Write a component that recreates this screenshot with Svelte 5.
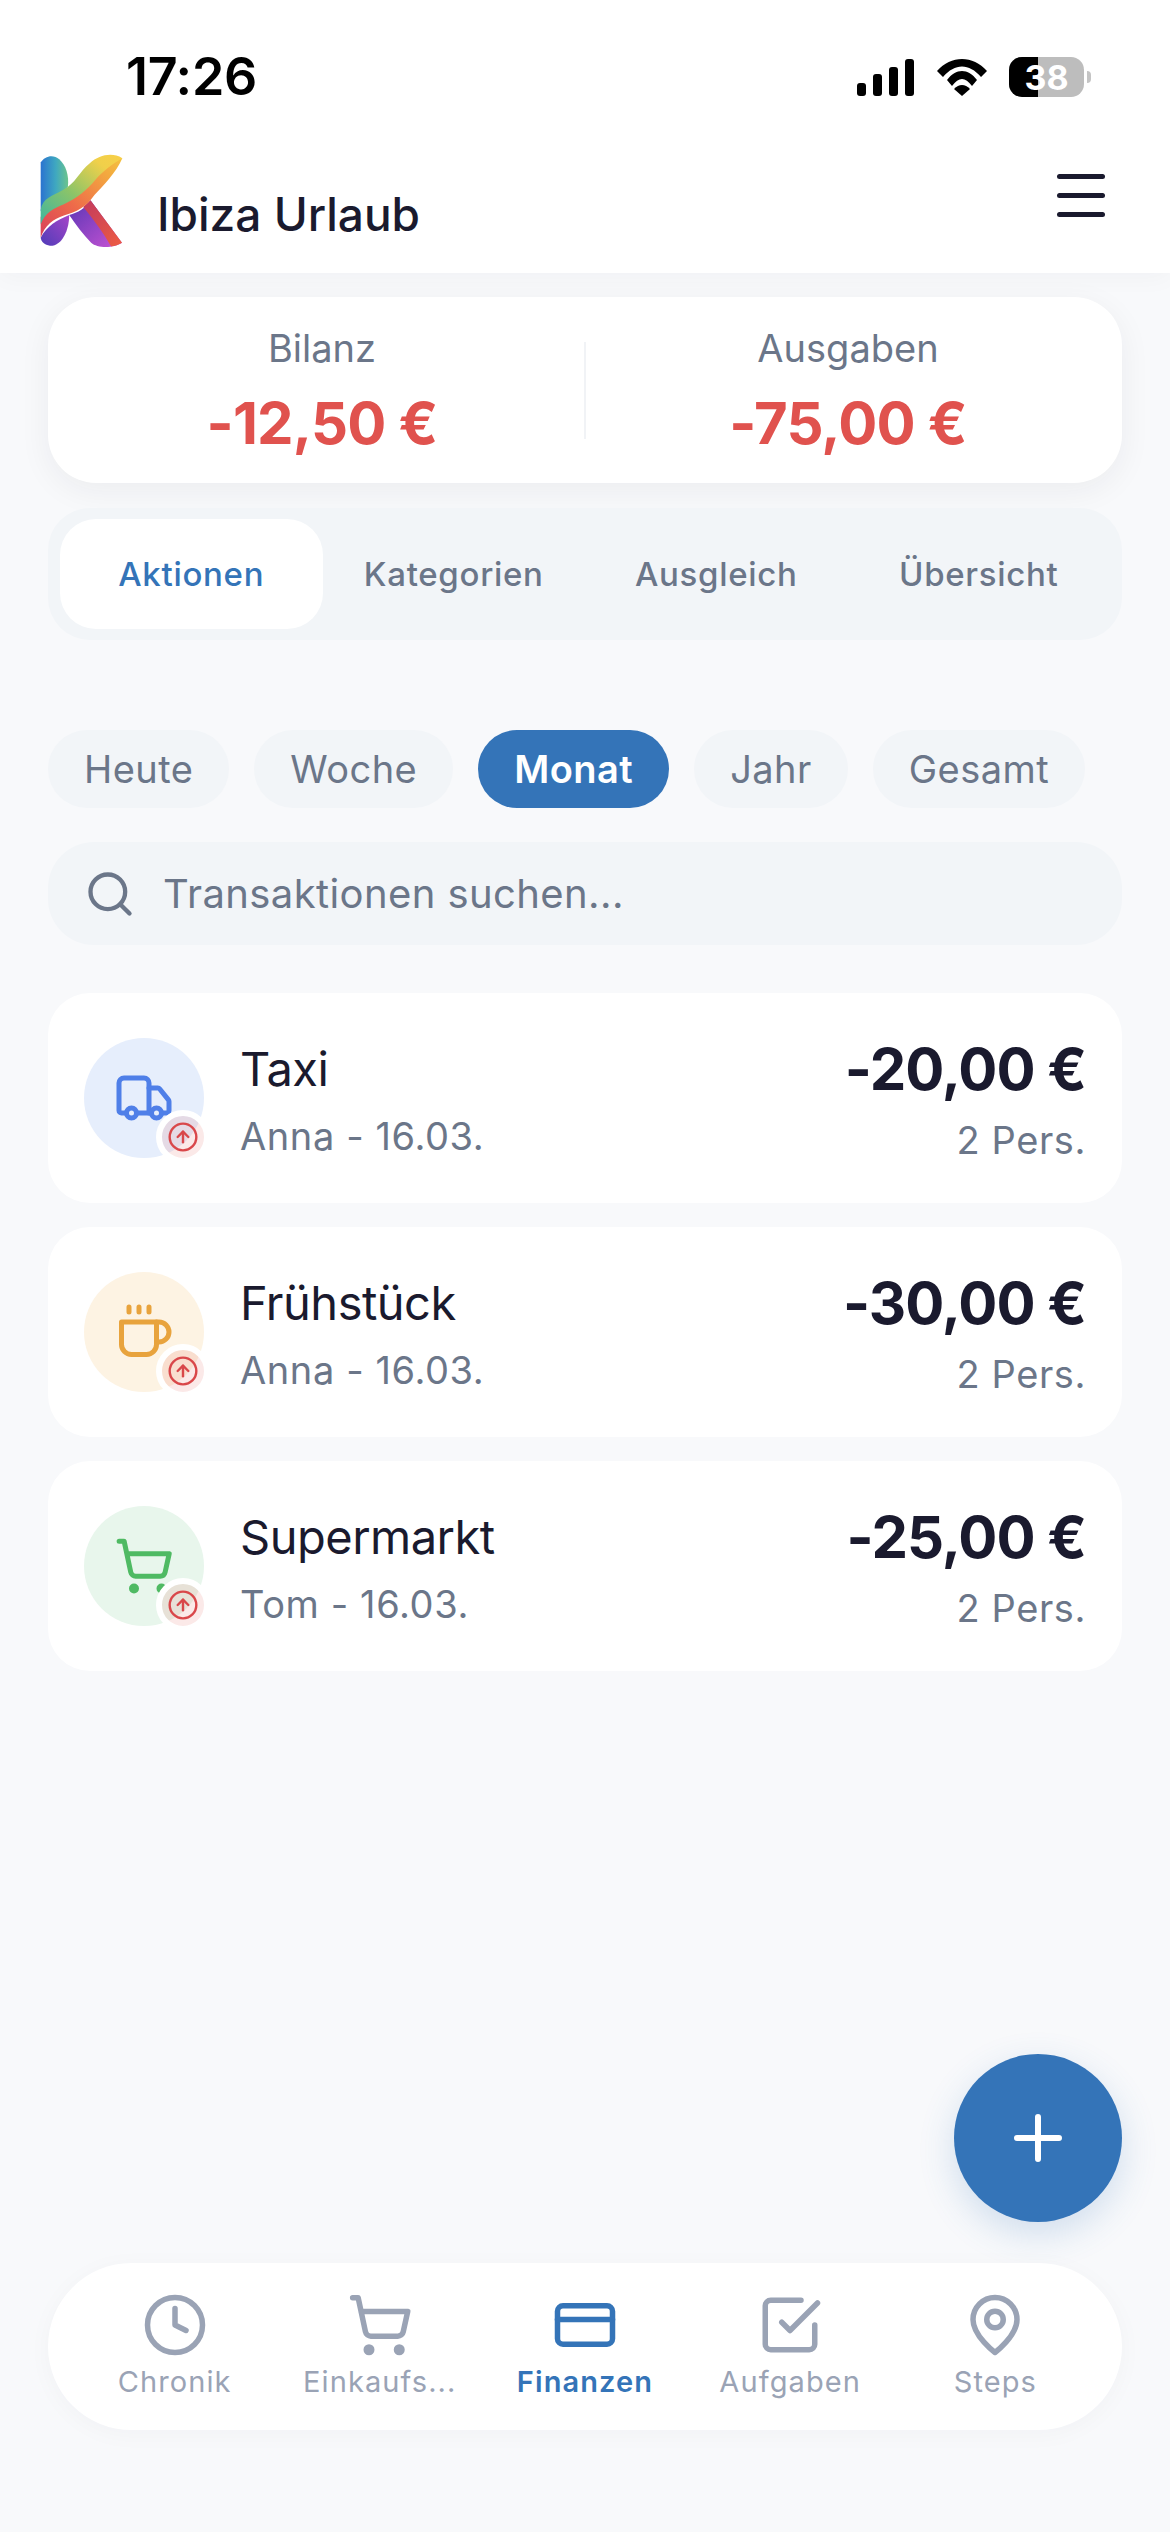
<script>
	const tabs = ['Aktionen', 'Kategorien', 'Ausgleich', 'Übersicht'];
	const ranges = ['Heute', 'Woche', 'Monat', 'Jahr', 'Gesamt'];
	const transactions = [
		{ kind: 'truck', title: 'Taxi', meta: 'Anna - 16.03.', amount: '-20,00 €', people: '2 Pers.' },
		{ kind: 'coffee', title: 'Frühstück', meta: 'Anna - 16.03.', amount: '-30,00 €', people: '2 Pers.' },
		{ kind: 'cart', title: 'Supermarkt', meta: 'Tom - 16.03.', amount: '-25,00 €', people: '2 Pers.' }
	];
	const navItems = [
		{ kind: 'clock', label: 'Chronik' },
		{ kind: 'cart', label: 'Einkaufs...' },
		{ kind: 'card', label: 'Finanzen', active: true },
		{ kind: 'check', label: 'Aufgaben' },
		{ kind: 'pin', label: 'Steps' }
	];
</script>

{#snippet icon(kind)}
	<svg class="icon" viewBox="0 0 24 24" fill="none" stroke="currentColor" stroke-width="2" stroke-linecap="round" stroke-linejoin="round">
		{#if kind === 'truck'}
			<path d="M14 18V6a2 2 0 0 0-2-2H4a2 2 0 0 0-2 2v11a1 1 0 0 0 1 1h2" />
			<path d="M15 18H9" />
			<path d="M19 18h2a1 1 0 0 0 1-1v-3.65a1 1 0 0 0-.22-.624l-3.48-4.35A1 1 0 0 0 17.52 8H14" />
			<circle cx="17" cy="18" r="2" />
			<circle cx="7" cy="18" r="2" />
		{:else if kind === 'coffee'}
			<path d="M17 8h1a4 4 0 1 1 0 8h-1" />
			<path d="M3 8h14v9a4 4 0 0 1-4 4H7a4 4 0 0 1-4-4Z" />
			<path d="M6 2v2M10 2v2M14 2v2" />
		{:else if kind === 'cart'}
			<circle cx="8" cy="21" r="1" />
			<circle cx="19" cy="21" r="1" />
			<path d="M2.05 2.05h2l2.66 12.42a2 2 0 0 0 2 1.58h9.78a2 2 0 0 0 1.95-1.57l1.65-7.43H5.12" />
		{:else if kind === 'clock'}
			<circle cx="12" cy="12" r="10" />
			<path d="M12 6v6l4 2" />
		{:else if kind === 'card'}
			<rect x="2" y="5" width="20" height="14" rx="2" />
			<path d="M2 10h20" />
		{:else if kind === 'check'}
			<path d="m9 11 3 3L22 4" />
			<path d="M21 12v7a2 2 0 0 1-2 2H5a2 2 0 0 1-2-2V5a2 2 0 0 1 2-2h11" />
		{:else if kind === 'pin'}
			<path d="M20 10c0 6-8 12-8 12s-8-6-8-12a8 8 0 0 1 16 0Z" />
			<circle cx="12" cy="10" r="3" />
		{/if}
	</svg>
{/snippet}

<div class="app">
	<header class="top">
		<div class="status">
			<span class="time">17:26</span>
			<div class="status-icons">
				<div class="signal">
					<i class="s1"></i><i class="s2"></i><i class="s3"></i><i class="s4"></i>
				</div>
				<svg class="wifi" viewBox="0 0 50 37">
					<path d="M0 12 C14 -4 36 -4 50 12 L44 18 C32 4 18 4 6 18 Z" fill="#000" />
					<path d="M10 21 C19 9 31 9 40 21 L35 27 C28 17.500 22 17.500 15 27 Z" fill="#000" />
					<path d="M17 30 C22 24.500 28 24.500 33 30 L25 37 Z" fill="#000" />
				</svg>
				<div class="battery">
					<div class="battery-body">
						<div class="battery-fill"></div>
						<span>38</span>
					</div>
					<div class="battery-nub"></div>
				</div>
			</div>
		</div>
		<div class="brand-row">
			<div class="brand">
				<svg class="logo" viewBox="58 70 250 285">
					<defs>
						<linearGradient id="stem" x1="0" y1="0" x2="1" y2="0">
							<stop offset="0" stop-color="#2b73d0" />
							<stop offset="0.55" stop-color="#3fa8c0" />
							<stop offset="1" stop-color="#6cc48c" />
						</linearGradient>
						<linearGradient id="band" x1="0" y1="1" x2="1" y2="0">
							<stop offset="0" stop-color="#3db5a0" />
							<stop offset="0.42" stop-color="#8cc468" />
							<stop offset="0.8" stop-color="#f0d04a" />
							<stop offset="1" stop-color="#f8cf48" />
						</linearGradient>
						<linearGradient id="ribbon" x1="0" y1="1" x2="1" y2="0">
							<stop offset="0" stop-color="#d8405a" />
							<stop offset="0.4" stop-color="#ee6a4a" />
							<stop offset="0.8" stop-color="#f3a83f" />
							<stop offset="1" stop-color="#f4c23f" />
						</linearGradient>
						<linearGradient id="foot" x1="0" y1="1" x2="1" y2="0">
							<stop offset="0" stop-color="#4f3cb8" />
							<stop offset="1" stop-color="#a545c8" />
						</linearGradient>
						<linearGradient id="leg" x1="0" y1="0" x2="1" y2="1">
							<stop offset="0" stop-color="#5a35b5" />
							<stop offset="1" stop-color="#c854d4" />
						</linearGradient>
						<linearGradient id="leg2" x1="0" y1="0" x2="1" y2="1">
							<stop offset="0" stop-color="#c23a5e" />
							<stop offset="1" stop-color="#ee5c42" />
						</linearGradient>
					</defs>
					<path d="M60 98 C72 78 98 72 116 88 C136 106 146 136 142 172 L100 210 L60 245 Z" fill="url(#stem)" />
					<path d="M60 325 C78 288 110 272 146 256 C146 300 125 350 88 349 C72 347 62 338 60 325 Z" fill="url(#foot)" />
					<path d="M146 256 C172 250 196 236 210 212 L305 340 C282 356 232 358 212 340 C188 314 166 286 146 256 Z" fill="url(#leg)" />
					<path d="M188 232 L210 212 L305 340 C296 346 284 350 272 351 C250 310 218 268 188 232 Z" fill="url(#leg2)" />
					<path d="M60 325 L60 262 C72 234 100 226 128 214 C168 196 192 158 220 126 C244 100 278 82 306 85 C286 130 250 166 222 196 C196 234 168 246 130 258 C98 268 72 288 60 325 Z" fill="url(#ribbon)" />
					<path d="M60 285 L60 240 C66 206 96 198 126 182 C166 160 176 126 208 100 C236 76 274 66 306 85 C280 100 245 125 225 150 C200 180 170 205 130 224 C100 236 72 250 60 285 Z" fill="url(#band)" />
				</svg>
				<span class="brand-name">Ibiza Urlaub</span>
			</div>
			<div class="burger"><i></i><i></i><i></i></div>
		</div>
	</header>

	<main class="content">
		<section class="summary">
			<div class="summary-col">
				<span class="summary-label">Bilanz</span>
				<span class="summary-value">-12,50 €</span>
			</div>
			<div class="divider"></div>
			<div class="summary-col">
				<span class="summary-label">Ausgaben</span>
				<span class="summary-value">-75,00 €</span>
			</div>
		</section>

		<nav class="tabs">
			{#each tabs as tab, index}
				<div class="tab" class:active={index === 0}>{tab}</div>
			{/each}
		</nav>

		<div class="ranges">
			{#each ranges as range}
				<div class="range" class:active={range === 'Monat'}>{range}</div>
			{/each}
		</div>

		<div class="search">
			<svg class="search-icon" viewBox="0 0 24 24" fill="none" stroke="currentColor" stroke-width="2" stroke-linecap="round" stroke-linejoin="round">
				<circle cx="11" cy="11" r="8" />
				<path d="m21 21-4.300-4.300" />
			</svg>
			<span>Transaktionen suchen...</span>
		</div>

		<div class="list">
			{#each transactions as item}
				<article class="row">
					<div class="avatar {item.kind}">
						{@render icon(item.kind)}
						<div class="badge">
							<svg viewBox="0 0 24 24" fill="none" stroke="currentColor" stroke-width="1.800" stroke-linecap="round" stroke-linejoin="round">
								<circle cx="12" cy="12" r="10" />
								<path d="m16 12-4-4-4 4" />
								<path d="M12 16V8" />
							</svg>
						</div>
					</div>
					<div class="row-text">
						<span class="row-title">{item.title}</span>
						<span class="row-meta">{item.meta}</span>
					</div>
					<div class="row-amount">
						<span class="amount">{item.amount}</span>
						<span class="row-meta">{item.people}</span>
					</div>
				</article>
			{/each}
		</div>
	</main>

	<button class="fab" aria-label="Hinzufügen">
		<svg viewBox="0 0 24 24" fill="none" stroke="currentColor" stroke-width="2" stroke-linecap="round">
			<path d="M5 12h14M12 5v14" />
		</svg>
	</button>

	<nav class="bottom-nav">
		{#each navItems as item}
			<div class="nav-item" class:active={item.active}>
				{@render icon(item.kind)}
				<span>{item.label}</span>
			</div>
		{/each}
	</nav>
</div>

<style>
	:global(body) {
		margin: 0;
		background: #f8f9fb;
	}

	.app {
		position: relative;
		height: 2532px;
		overflow: hidden;
		background: #f8f9fb;
		font-family: Inter, 'Noto Sans', sans-serif;
		color: #1a1a2e;
	}

	.top {
		height: 273px;
		background: #fff;
		box-shadow: 0 4px 24px rgba(30, 41, 59, 0.035);
		position: relative;
	}

	.status {
		height: 140px;
		display: flex;
		justify-content: space-between;
		padding: 0 79px 0 126px;
		box-sizing: border-box;
	}

	.time {
		margin-top: 47px;
		font-size: 52px;
		line-height: 60px;
		font-weight: 600;
		color: #000;
		letter-spacing: -0.3px;
	}

	.status-icons {
		display: flex;
		align-items: flex-start;
		padding-top: 57px;
	}

	.signal {
		display: flex;
		align-items: flex-end;
		gap: 7px;
		height: 37px;
		margin-top: 2px;
	}

	.signal i {
		display: block;
		width: 9px;
		background: #000;
		border-radius: 3px;
	}

	.s1 { height: 13px; }
	.s2 { height: 22px; }
	.s3 { height: 29px; }
	.s4 { height: 37px; }

	.wifi {
		width: 50px;
		height: 37px;
		margin: 2px 22px 0 23px;
	}

	.battery {
		display: flex;
		align-items: center;
		gap: 3px;
		height: 40px;
	}

	.battery-body {
		position: relative;
		width: 75px;
		height: 40px;
		border-radius: 13px;
		background: #bdbdbd;
		overflow: hidden;
		display: flex;
		align-items: center;
		justify-content: center;
	}

	.battery-fill {
		position: absolute;
		left: 0;
		top: 0;
		bottom: 0;
		width: 29px;
		background: #000;
	}

	.battery-body span {
		position: relative;
		color: #fff;
		font-size: 34px;
		font-weight: 700;
	}

	.battery-nub {
		width: 4px;
		height: 12px;
		background: #c4c4c4;
		border-radius: 0 4px 4px 0;
	}

	.brand-row {
		display: flex;
		justify-content: space-between;
		padding: 13px 65px 0 40px;
	}

	.brand {
		display: flex;
		align-items: flex-end;
		gap: 34px;
	}

	.logo {
		width: 83px;
		height: 95px;
	}

	.brand-name {
		font-size: 46px;
		line-height: 56px;
		font-weight: 500;
		margin-bottom: 6px;
	}

	.burger {
		display: flex;
		flex-direction: column;
		gap: 14px;
		padding-top: 21px;
	}

	.burger i {
		display: block;
		width: 48px;
		height: 5px;
		border-radius: 3px;
		background: #1a1a2e;
	}

	.content {
		padding: 24px 48px 0;
		display: flex;
		flex-direction: column;
	}

	.summary {
		height: 186px;
		background: #fff;
		border-radius: 48px;
		box-shadow: 0 8px 32px rgba(30, 41, 59, 0.06);
		display: grid;
		grid-template-columns: 1fr 2px 1fr;
		align-items: center;
		padding: 0 12px;
	}

	.summary-col {
		display: flex;
		flex-direction: column;
		align-items: center;
		gap: 18px;
		padding-top: 4px;
	}

	.summary-label {
		font-size: 38px;
		line-height: 44px;
		color: #6b7689;
	}

	.summary-value {
		font-size: 58px;
		line-height: 70px;
		font-weight: 700;
		color: #e0524e;
		letter-spacing: -0.8px;
	}

	.divider {
		height: 97px;
		background: #f1f3f6;
	}

	.tabs {
		margin-top: 25px;
		height: 132px;
		box-sizing: border-box;
		padding: 11px 12px;
		background: #f2f5f8;
		border-radius: 42px;
		display: grid;
		grid-template-columns: repeat(4, 1fr);
	}

	.tab {
		display: flex;
		align-items: center;
		justify-content: center;
		font-size: 33px;
		font-weight: 500;
		color: #6b7689;
		letter-spacing: 0.7px;
		border-radius: 36px;
	}

	.tab.active {
		background: #fff;
		color: #3474b8;
	}

	.ranges {
		margin-top: 90px;
		display: flex;
		gap: 25px;
	}

	.range {
		height: 78px;
		padding: 0 36px;
		display: flex;
		align-items: center;
		border-radius: 39px;
		background: #f2f5f8;
		color: #6b7689;
		font-size: 38px;
		letter-spacing: 0.45px;
	}

	.range.active {
		background: #3474b8;
		color: #fff;
		font-weight: 600;
	}

	.search {
		margin-top: 34px;
		height: 103px;
		background: #f2f5f8;
		border-radius: 46px;
		display: flex;
		align-items: center;
		padding-left: 36px;
		gap: 27px;
		color: #6b7689;
		font-size: 40px;
		letter-spacing: 0.4px;
	}

	.search-icon {
		width: 52px;
		height: 52px;
	}

	.list {
		margin-top: 48px;
		display: flex;
		flex-direction: column;
		gap: 24px;
	}

	.row {
		height: 210px;
		box-sizing: border-box;
		background: #fff;
		border-radius: 42px;
		padding: 0 36px;
		display: flex;
		align-items: center;
		gap: 36px;
	}

	.avatar {
		position: relative;
		width: 120px;
		height: 120px;
		border-radius: 50%;
		display: flex;
		align-items: center;
		justify-content: center;
		flex-shrink: 0;
	}

	.avatar .icon {
		width: 60px;
		height: 60px;
	}

	.avatar.truck { background: #e6eefc; color: #4f7fe8; }
	.avatar.coffee { background: #fdf3e3; color: #e8a33d; }
	.avatar.cart { background: #e8f6ec; color: #4fba63; }

	.badge {
		position: absolute;
		right: -6px;
		bottom: -6px;
		width: 42px;
		height: 42px;
		border: 6px solid #fff;
		border-radius: 50%;
		background: rgba(224, 82, 78, 0.13);
		color: #d9474a;
		display: flex;
		align-items: center;
		justify-content: center;
	}

	.badge svg {
		width: 32px;
		height: 32px;
	}

	.row-text {
		flex: 1;
		display: flex;
		flex-direction: column;
		gap: 15px;
		padding-top: 3px;
	}

	.row-title {
		font-size: 47px;
		line-height: 58px;
		letter-spacing: -0.5px;
	}

	.row-meta {
		font-size: 38px;
		line-height: 46px;
		color: #6b7689;
		letter-spacing: 0.6px;
	}

	.row-amount {
		display: flex;
		flex-direction: column;
		align-items: flex-end;
		gap: 18px;
		padding-top: 6px;
	}

	.amount {
		font-size: 58px;
		line-height: 60px;
		font-weight: 700;
		letter-spacing: -1px;
	}

	.fab {
		position: absolute;
		left: 954px;
		top: 2054px;
		width: 168px;
		height: 168px;
		border: 0;
		padding: 0;
		border-radius: 50%;
		background: #3474b8;
		color: #fff;
		box-shadow: 0 12px 36px rgba(52, 116, 184, 0.2);
		display: flex;
		align-items: center;
		justify-content: center;
	}

	.fab svg {
		width: 72px;
		height: 72px;
	}

	.bottom-nav {
		position: absolute;
		left: 48px;
		right: 48px;
		top: 2263px;
		height: 167px;
		box-sizing: border-box;
		padding: 29px 24px 0;
		background: #fff;
		border-radius: 84px;
		box-shadow: 0 4px 24px rgba(30, 41, 59, 0.03);
		display: grid;
		grid-template-columns: repeat(5, 1fr);
	}

	.nav-item {
		display: flex;
		flex-direction: column;
		align-items: center;
		color: #9aa3b5;
		font-size: 29px;
		letter-spacing: 1.1px;
	}

	.nav-item .icon {
		width: 66px;
		height: 66px;
	}

	.nav-item span {
		margin-top: 6px;
		line-height: 36px;
	}

	.nav-item.active {
		color: #3474b8;
		font-weight: 600;
	}
</style>
